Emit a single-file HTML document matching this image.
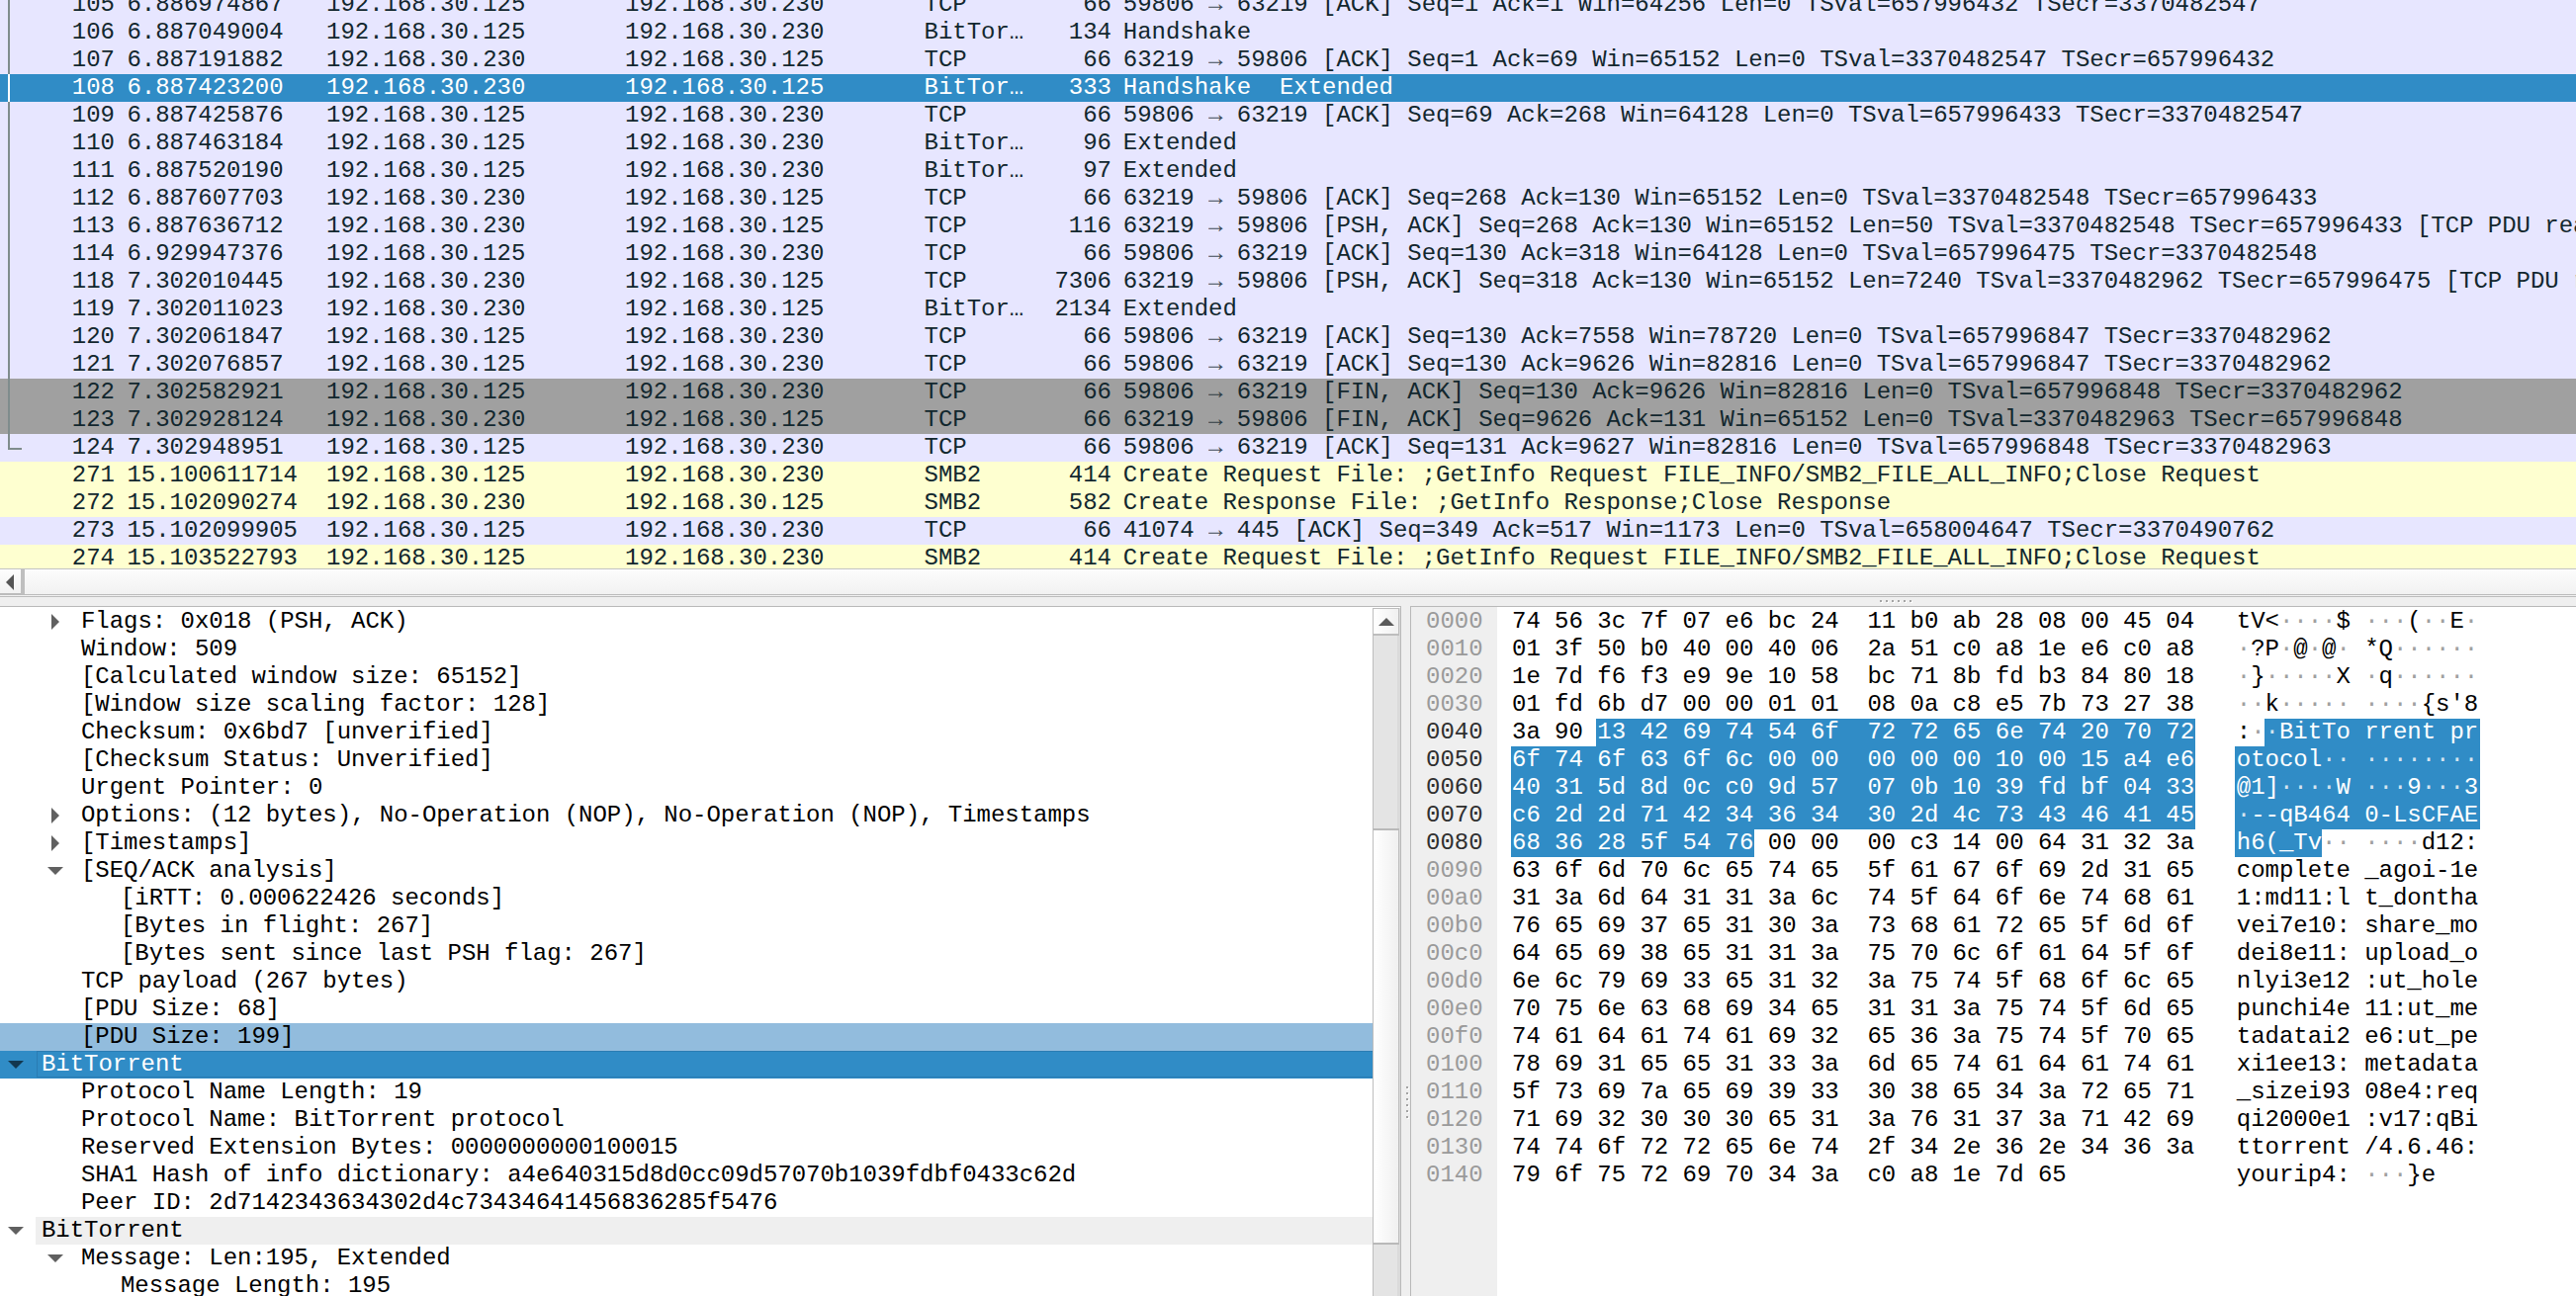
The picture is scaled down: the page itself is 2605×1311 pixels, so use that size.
<!DOCTYPE html>
<html><head><meta charset="utf-8"><title>Wireshark</title>
<style>
html,body{margin:0;padding:0}
body{width:2605px;height:1311px;overflow:hidden;position:relative;background:#efefef;font-family:'Liberation Mono',monospace;font-size:24px;line-height:28px;}
.c{position:absolute;white-space:pre;top:0;letter-spacing:-0.027px}
.c.r{text-align:right}
.ar{opacity:0.8}
#plist{position:absolute;left:0;top:0;width:2605px;height:575px;overflow:hidden;background:#ffffff}
.pr{position:absolute;left:0;width:2605px;height:28px;overflow:hidden}
#hsb{position:absolute;left:0;top:575px;width:2605px;height:29px;background:linear-gradient(#fdfdfd,#f0f0f0)}
.hsb-top{position:absolute;left:0;top:0;width:2605px;height:1px;background:#c4c4c4}
.hsb-btn{position:absolute;left:0;top:1px;width:21px;height:24px;background:linear-gradient(#fefefe,#f2f2f2);border-bottom:2px solid #bcbcbc}
.hsb-sep{position:absolute;left:21px;top:1px;width:4px;height:26px;background:#bfbfbf}
.hsb-l1{position:absolute;left:0;top:26px;width:2605px;height:1px;background:#bcbcbc}
.hsb-l2{position:absolute;left:0;top:28px;width:2605px;height:1px;background:#bcbcbc}
.tri-l{position:absolute;left:6px;top:5px;width:0;height:0;border-top:8px solid transparent;border-bottom:8px solid transparent;border-right:8px solid #555555}
#split1{position:absolute;left:0;top:604px;width:2605px;height:9px;background:#efefef}
.dot{position:absolute;width:2px;height:2px;background:#a4a4a4;box-shadow:1px 1px 0 #ffffff}
#det{position:absolute;left:0;top:613px;width:1416px;height:698px;background:#ffffff;border-top:1px solid #b9b9b9;border-right:1px solid #b9b9b9;box-sizing:content-box;overflow:hidden}
.tri-r{position:absolute;width:0;height:0;border-top:8px solid transparent;border-bottom:8px solid transparent;border-left:8px solid #606060}
.tri-d{position:absolute;width:0;height:0;border-left:8px solid transparent;border-right:8px solid transparent;border-top:8px solid #606060}
#vsb{position:absolute;left:1388px;top:1px;width:28px;height:698px}
.vsb-btn{position:absolute;left:0;top:0;width:27px;height:28px;box-sizing:border-box;border:1px solid #bdbdbd;border-bottom-width:2px;background:linear-gradient(90deg,#ffffff,#f0f0f0)}
.tri-u{position:absolute;left:5px;top:9px;width:0;height:0;border-left:8px solid transparent;border-right:8px solid transparent;border-bottom:8px solid #5a5a5a}
.vsb-groove{position:absolute;left:0;width:28px;box-sizing:border-box;background:#e4e4e4;border-left:1px solid #bdbdbd;border-right:3px solid #dadada}
.vsb-slider{position:absolute;left:0;width:27px;box-sizing:border-box;background:linear-gradient(90deg,#ffffff,#f0f0f0);border:1px solid #bdbdbd;border-top:2px solid #b9b9b9;border-bottom:2px solid #b9b9b9}
#hex{position:absolute;left:1426px;top:613px;width:1179px;height:698px;background:#ffffff;border-top:1px solid #b9b9b9;border-left:1px solid #b9b9b9;overflow:hidden}
</style></head><body>
<div id="plist">
<div class="pr" style="top:-9px;background:#e7e6ff;color:#12272e">
<span class="c r" style="right:2489px">105</span>
<span class="c" style="left:128.4px">6.886974867</span>
<span class="c" style="left:330.1px">192.168.30.125</span>
<span class="c" style="left:632.0px">192.168.30.230</span>
<span class="c" style="left:934.6px">TCP</span>
<span class="c r" style="right:1481.1px">66</span>
<span class="c" style="left:1135.8px">59806 <span class="ar">→</span> 63219 [ACK] Seq=1 Ack=1 Win=64256 Len=0 TSval=657996432 TSecr=3370482547</span>
<div style="position:absolute;left:8px;top:0;width:2px;height:28px;background:#7f8c8d"></div>
</div>
<div class="pr" style="top:19px;background:#e7e6ff;color:#12272e">
<span class="c r" style="right:2489px">106</span>
<span class="c" style="left:128.4px">6.887049004</span>
<span class="c" style="left:330.1px">192.168.30.125</span>
<span class="c" style="left:632.0px">192.168.30.230</span>
<span class="c" style="left:934.6px">BitTor…</span>
<span class="c r" style="right:1481.1px">134</span>
<span class="c" style="left:1135.8px">Handshake</span>
<div style="position:absolute;left:8px;top:0;width:2px;height:28px;background:#7f8c8d"></div>
</div>
<div class="pr" style="top:47px;background:#e7e6ff;color:#12272e">
<span class="c r" style="right:2489px">107</span>
<span class="c" style="left:128.4px">6.887191882</span>
<span class="c" style="left:330.1px">192.168.30.230</span>
<span class="c" style="left:632.0px">192.168.30.125</span>
<span class="c" style="left:934.6px">TCP</span>
<span class="c r" style="right:1481.1px">66</span>
<span class="c" style="left:1135.8px">63219 <span class="ar">→</span> 59806 [ACK] Seq=1 Ack=69 Win=65152 Len=0 TSval=3370482547 TSecr=657996432</span>
<div style="position:absolute;left:8px;top:0;width:2px;height:28px;background:#7f8c8d"></div>
</div>
<div class="pr" style="top:75px;background:#308cc6;color:#ffffff">
<span class="c r" style="right:2489px">108</span>
<span class="c" style="left:128.4px">6.887423200</span>
<span class="c" style="left:330.1px">192.168.30.230</span>
<span class="c" style="left:632.0px">192.168.30.125</span>
<span class="c" style="left:934.6px">BitTor…</span>
<span class="c r" style="right:1481.1px">333</span>
<span class="c" style="left:1135.8px">Handshake  Extended</span>
<div style="position:absolute;left:8px;top:0;width:2px;height:28px;background:#ffffff"></div>
</div>
<div class="pr" style="top:103px;background:#e7e6ff;color:#12272e">
<span class="c r" style="right:2489px">109</span>
<span class="c" style="left:128.4px">6.887425876</span>
<span class="c" style="left:330.1px">192.168.30.125</span>
<span class="c" style="left:632.0px">192.168.30.230</span>
<span class="c" style="left:934.6px">TCP</span>
<span class="c r" style="right:1481.1px">66</span>
<span class="c" style="left:1135.8px">59806 <span class="ar">→</span> 63219 [ACK] Seq=69 Ack=268 Win=64128 Len=0 TSval=657996433 TSecr=3370482547</span>
<div style="position:absolute;left:8px;top:0;width:2px;height:28px;background:#7f8c8d"></div>
</div>
<div class="pr" style="top:131px;background:#e7e6ff;color:#12272e">
<span class="c r" style="right:2489px">110</span>
<span class="c" style="left:128.4px">6.887463184</span>
<span class="c" style="left:330.1px">192.168.30.125</span>
<span class="c" style="left:632.0px">192.168.30.230</span>
<span class="c" style="left:934.6px">BitTor…</span>
<span class="c r" style="right:1481.1px">96</span>
<span class="c" style="left:1135.8px">Extended</span>
<div style="position:absolute;left:8px;top:0;width:2px;height:28px;background:#7f8c8d"></div>
</div>
<div class="pr" style="top:159px;background:#e7e6ff;color:#12272e">
<span class="c r" style="right:2489px">111</span>
<span class="c" style="left:128.4px">6.887520190</span>
<span class="c" style="left:330.1px">192.168.30.125</span>
<span class="c" style="left:632.0px">192.168.30.230</span>
<span class="c" style="left:934.6px">BitTor…</span>
<span class="c r" style="right:1481.1px">97</span>
<span class="c" style="left:1135.8px">Extended</span>
<div style="position:absolute;left:8px;top:0;width:2px;height:28px;background:#7f8c8d"></div>
</div>
<div class="pr" style="top:187px;background:#e7e6ff;color:#12272e">
<span class="c r" style="right:2489px">112</span>
<span class="c" style="left:128.4px">6.887607703</span>
<span class="c" style="left:330.1px">192.168.30.230</span>
<span class="c" style="left:632.0px">192.168.30.125</span>
<span class="c" style="left:934.6px">TCP</span>
<span class="c r" style="right:1481.1px">66</span>
<span class="c" style="left:1135.8px">63219 <span class="ar">→</span> 59806 [ACK] Seq=268 Ack=130 Win=65152 Len=0 TSval=3370482548 TSecr=657996433</span>
<div style="position:absolute;left:8px;top:0;width:2px;height:28px;background:#7f8c8d"></div>
</div>
<div class="pr" style="top:215px;background:#e7e6ff;color:#12272e">
<span class="c r" style="right:2489px">113</span>
<span class="c" style="left:128.4px">6.887636712</span>
<span class="c" style="left:330.1px">192.168.30.230</span>
<span class="c" style="left:632.0px">192.168.30.125</span>
<span class="c" style="left:934.6px">TCP</span>
<span class="c r" style="right:1481.1px">116</span>
<span class="c" style="left:1135.8px">63219 <span class="ar">→</span> 59806 [PSH, ACK] Seq=268 Ack=130 Win=65152 Len=50 TSval=3370482548 TSecr=657996433 [TCP PDU reassembled in 118]</span>
<div style="position:absolute;left:8px;top:0;width:2px;height:28px;background:#7f8c8d"></div>
</div>
<div class="pr" style="top:243px;background:#e7e6ff;color:#12272e">
<span class="c r" style="right:2489px">114</span>
<span class="c" style="left:128.4px">6.929947376</span>
<span class="c" style="left:330.1px">192.168.30.125</span>
<span class="c" style="left:632.0px">192.168.30.230</span>
<span class="c" style="left:934.6px">TCP</span>
<span class="c r" style="right:1481.1px">66</span>
<span class="c" style="left:1135.8px">59806 <span class="ar">→</span> 63219 [ACK] Seq=130 Ack=318 Win=64128 Len=0 TSval=657996475 TSecr=3370482548</span>
<div style="position:absolute;left:8px;top:0;width:2px;height:28px;background:#7f8c8d"></div>
</div>
<div class="pr" style="top:271px;background:#e7e6ff;color:#12272e">
<span class="c r" style="right:2489px">118</span>
<span class="c" style="left:128.4px">7.302010445</span>
<span class="c" style="left:330.1px">192.168.30.230</span>
<span class="c" style="left:632.0px">192.168.30.125</span>
<span class="c" style="left:934.6px">TCP</span>
<span class="c r" style="right:1481.1px">7306</span>
<span class="c" style="left:1135.8px">63219 <span class="ar">→</span> 59806 [PSH, ACK] Seq=318 Ack=130 Win=65152 Len=7240 TSval=3370482962 TSecr=657996475 [TCP PDU reassembled in 119]</span>
<div style="position:absolute;left:8px;top:0;width:2px;height:28px;background:#7f8c8d"></div>
</div>
<div class="pr" style="top:299px;background:#e7e6ff;color:#12272e">
<span class="c r" style="right:2489px">119</span>
<span class="c" style="left:128.4px">7.302011023</span>
<span class="c" style="left:330.1px">192.168.30.230</span>
<span class="c" style="left:632.0px">192.168.30.125</span>
<span class="c" style="left:934.6px">BitTor…</span>
<span class="c r" style="right:1481.1px">2134</span>
<span class="c" style="left:1135.8px">Extended</span>
<div style="position:absolute;left:8px;top:0;width:2px;height:28px;background:#7f8c8d"></div>
</div>
<div class="pr" style="top:327px;background:#e7e6ff;color:#12272e">
<span class="c r" style="right:2489px">120</span>
<span class="c" style="left:128.4px">7.302061847</span>
<span class="c" style="left:330.1px">192.168.30.125</span>
<span class="c" style="left:632.0px">192.168.30.230</span>
<span class="c" style="left:934.6px">TCP</span>
<span class="c r" style="right:1481.1px">66</span>
<span class="c" style="left:1135.8px">59806 <span class="ar">→</span> 63219 [ACK] Seq=130 Ack=7558 Win=78720 Len=0 TSval=657996847 TSecr=3370482962</span>
<div style="position:absolute;left:8px;top:0;width:2px;height:28px;background:#7f8c8d"></div>
</div>
<div class="pr" style="top:355px;background:#e7e6ff;color:#12272e">
<span class="c r" style="right:2489px">121</span>
<span class="c" style="left:128.4px">7.302076857</span>
<span class="c" style="left:330.1px">192.168.30.125</span>
<span class="c" style="left:632.0px">192.168.30.230</span>
<span class="c" style="left:934.6px">TCP</span>
<span class="c r" style="right:1481.1px">66</span>
<span class="c" style="left:1135.8px">59806 <span class="ar">→</span> 63219 [ACK] Seq=130 Ack=9626 Win=82816 Len=0 TSval=657996847 TSecr=3370482962</span>
<div style="position:absolute;left:8px;top:0;width:2px;height:28px;background:#7f8c8d"></div>
</div>
<div class="pr" style="top:383px;background:#a0a0a0;color:#12272e">
<span class="c r" style="right:2489px">122</span>
<span class="c" style="left:128.4px">7.302582921</span>
<span class="c" style="left:330.1px">192.168.30.125</span>
<span class="c" style="left:632.0px">192.168.30.230</span>
<span class="c" style="left:934.6px">TCP</span>
<span class="c r" style="right:1481.1px">66</span>
<span class="c" style="left:1135.8px">59806 <span class="ar">→</span> 63219 [FIN, ACK] Seq=130 Ack=9626 Win=82816 Len=0 TSval=657996848 TSecr=3370482962</span>
<div style="position:absolute;left:8px;top:0;width:2px;height:28px;background:#7f8c8d"></div>
</div>
<div class="pr" style="top:411px;background:#a0a0a0;color:#12272e">
<span class="c r" style="right:2489px">123</span>
<span class="c" style="left:128.4px">7.302928124</span>
<span class="c" style="left:330.1px">192.168.30.230</span>
<span class="c" style="left:632.0px">192.168.30.125</span>
<span class="c" style="left:934.6px">TCP</span>
<span class="c r" style="right:1481.1px">66</span>
<span class="c" style="left:1135.8px">63219 <span class="ar">→</span> 59806 [FIN, ACK] Seq=9626 Ack=131 Win=65152 Len=0 TSval=3370482963 TSecr=657996848</span>
<div style="position:absolute;left:8px;top:0;width:2px;height:28px;background:#7f8c8d"></div>
</div>
<div class="pr" style="top:439px;background:#e7e6ff;color:#12272e">
<span class="c r" style="right:2489px">124</span>
<span class="c" style="left:128.4px">7.302948951</span>
<span class="c" style="left:330.1px">192.168.30.125</span>
<span class="c" style="left:632.0px">192.168.30.230</span>
<span class="c" style="left:934.6px">TCP</span>
<span class="c r" style="right:1481.1px">66</span>
<span class="c" style="left:1135.8px">59806 <span class="ar">→</span> 63219 [ACK] Seq=131 Ack=9627 Win=82816 Len=0 TSval=657996848 TSecr=3370482963</span>
<div style="position:absolute;left:8px;top:0;width:2px;height:16px;background:#7f8c8d"></div>
<div style="position:absolute;left:8px;top:14px;width:14px;height:2px;background:#7f8c8d"></div>
</div>
<div class="pr" style="top:467px;background:#feffd0;color:#12272e">
<span class="c r" style="right:2489px">271</span>
<span class="c" style="left:128.4px">15.100611714</span>
<span class="c" style="left:330.1px">192.168.30.125</span>
<span class="c" style="left:632.0px">192.168.30.230</span>
<span class="c" style="left:934.6px">SMB2</span>
<span class="c r" style="right:1481.1px">414</span>
<span class="c" style="left:1135.8px">Create Request File: ;GetInfo Request FILE_INFO/SMB2_FILE_ALL_INFO;Close Request</span>
</div>
<div class="pr" style="top:495px;background:#feffd0;color:#12272e">
<span class="c r" style="right:2489px">272</span>
<span class="c" style="left:128.4px">15.102090274</span>
<span class="c" style="left:330.1px">192.168.30.230</span>
<span class="c" style="left:632.0px">192.168.30.125</span>
<span class="c" style="left:934.6px">SMB2</span>
<span class="c r" style="right:1481.1px">582</span>
<span class="c" style="left:1135.8px">Create Response File: ;GetInfo Response;Close Response</span>
</div>
<div class="pr" style="top:523px;background:#e7e6ff;color:#12272e">
<span class="c r" style="right:2489px">273</span>
<span class="c" style="left:128.4px">15.102099905</span>
<span class="c" style="left:330.1px">192.168.30.125</span>
<span class="c" style="left:632.0px">192.168.30.230</span>
<span class="c" style="left:934.6px">TCP</span>
<span class="c r" style="right:1481.1px">66</span>
<span class="c" style="left:1135.8px">41074 <span class="ar">→</span> 445 [ACK] Seq=349 Ack=517 Win=1173 Len=0 TSval=658004647 TSecr=3370490762</span>
</div>
<div class="pr" style="top:551px;background:#feffd0;color:#12272e">
<span class="c r" style="right:2489px">274</span>
<span class="c" style="left:128.4px">15.103522793</span>
<span class="c" style="left:330.1px">192.168.30.125</span>
<span class="c" style="left:632.0px">192.168.30.230</span>
<span class="c" style="left:934.6px">SMB2</span>
<span class="c r" style="right:1481.1px">414</span>
<span class="c" style="left:1135.8px">Create Request File: ;GetInfo Request FILE_INFO/SMB2_FILE_ALL_INFO;Close Request</span>
</div>
</div>
<div id="hsb">
 <div class="hsb-top"></div>
 <div class="hsb-btn"><div class="tri-l"></div></div>
 <div class="hsb-sep"></div>
 <div class="hsb-l1"></div><div class="hsb-l2"></div>
</div>
<div id="split1"></div>
<div class="dot" style="left:1901px;top:607px"></div>
<div class="dot" style="left:1907px;top:607px"></div>
<div class="dot" style="left:1913px;top:607px"></div>
<div class="dot" style="left:1919px;top:607px"></div>
<div class="dot" style="left:1925px;top:607px"></div>
<div class="dot" style="left:1931px;top:607px"></div>
<div id="det">
<span class="c" style="left:81.9px;top:1px;color:#000000">Flags: 0x018 (PSH, ACK)</span>
<div class="tri-r" style="left:52px;top:7px;border-left-color:#606060"></div>
<span class="c" style="left:81.9px;top:29px;color:#000000">Window: 509</span>
<span class="c" style="left:81.9px;top:57px;color:#000000">[Calculated window size: 65152]</span>
<span class="c" style="left:81.9px;top:85px;color:#000000">[Window size scaling factor: 128]</span>
<span class="c" style="left:81.9px;top:113px;color:#000000">Checksum: 0x6bd7 [unverified]</span>
<span class="c" style="left:81.9px;top:141px;color:#000000">[Checksum Status: Unverified]</span>
<span class="c" style="left:81.9px;top:169px;color:#000000">Urgent Pointer: 0</span>
<span class="c" style="left:81.9px;top:197px;color:#000000">Options: (12 bytes), No-Operation (NOP), No-Operation (NOP), Timestamps</span>
<div class="tri-r" style="left:52px;top:203px;border-left-color:#606060"></div>
<span class="c" style="left:81.9px;top:225px;color:#000000">[Timestamps]</span>
<div class="tri-r" style="left:52px;top:231px;border-left-color:#606060"></div>
<span class="c" style="left:81.9px;top:253px;color:#000000">[SEQ/ACK analysis]</span>
<div class="tri-d" style="left:48px;top:263px;border-top-color:#606060"></div>
<span class="c" style="left:121.9px;top:281px;color:#000000">[iRTT: 0.000622426 seconds]</span>
<span class="c" style="left:121.9px;top:309px;color:#000000">[Bytes in flight: 267]</span>
<span class="c" style="left:121.9px;top:337px;color:#000000">[Bytes sent since last PSH flag: 267]</span>
<span class="c" style="left:81.9px;top:365px;color:#000000">TCP payload (267 bytes)</span>
<span class="c" style="left:81.9px;top:393px;color:#000000">[PDU Size: 68]</span>
<div style="position:absolute;left:0;top:421px;width:1388px;height:28px;background:#92bcdd"></div>
<span class="c" style="left:81.9px;top:421px;color:#000000">[PDU Size: 199]</span>
<div style="position:absolute;left:0;top:449px;width:1388px;height:28px;background:#308cc6"></div>
<div style="position:absolute;left:37px;top:449px;width:1351px;height:27px;border-top:1px solid #2a7cb3;border-left:1px solid #2a7cb3;border-bottom:1px solid #2a7cb3;box-sizing:border-box"></div>
<span class="c" style="left:41.9px;top:449px;color:#ffffff">BitTorrent</span>
<div class="tri-d" style="left:8px;top:459px;border-top-color:#12374f"></div>
<span class="c" style="left:81.9px;top:477px;color:#000000">Protocol Name Length: 19</span>
<span class="c" style="left:81.9px;top:505px;color:#000000">Protocol Name: BitTorrent protocol</span>
<span class="c" style="left:81.9px;top:533px;color:#000000">Reserved Extension Bytes: 0000000000100015</span>
<span class="c" style="left:81.9px;top:561px;color:#000000">SHA1 Hash of info dictionary: a4e640315d8d0cc09d57070b1039fdbf0433c62d</span>
<span class="c" style="left:81.9px;top:589px;color:#000000">Peer ID: 2d7142343634302d4c73434641456836285f5476</span>
<div style="position:absolute;left:36px;top:617px;width:1352px;height:28px;background:#efefef"></div>
<span class="c" style="left:41.9px;top:617px;color:#000000">BitTorrent</span>
<div class="tri-d" style="left:8px;top:627px;border-top-color:#606060"></div>
<span class="c" style="left:81.9px;top:645px;color:#000000">Message: Len:195, Extended</span>
<div class="tri-d" style="left:48px;top:655px;border-top-color:#606060"></div>
<span class="c" style="left:121.9px;top:673px;color:#000000">Message Length: 195</span>
<div id="vsb">
 <div class="vsb-groove" style="top:0;height:698px"></div>
 <div class="vsb-btn"><div class="tri-u"></div></div>
 <div class="vsb-slider" style="top:223px;height:421px"></div>
</div>
</div>
<div class="dot" style="left:1422px;top:1099px"></div>
<div class="dot" style="left:1422px;top:1105px"></div>
<div class="dot" style="left:1422px;top:1111px"></div>
<div class="dot" style="left:1422px;top:1117px"></div>
<div class="dot" style="left:1422px;top:1123px"></div>
<div class="dot" style="left:1422px;top:1129px"></div>
<div id="hex">
<div style="position:absolute;left:0;top:0;width:87px;height:698px;background:#efefef"></div>
<span class="c" style="left:15.0px;top:1px;color:#9a9a9a">0000</span>
<span class="c" style="left:102.00px;top:1px;color:#000000">74</span>
<span class="c" style="left:145.12px;top:1px;color:#000000">56</span>
<span class="c" style="left:188.25px;top:1px;color:#000000">3c</span>
<span class="c" style="left:231.38px;top:1px;color:#000000">7f</span>
<span class="c" style="left:274.50px;top:1px;color:#000000">07</span>
<span class="c" style="left:317.62px;top:1px;color:#000000">e6</span>
<span class="c" style="left:360.75px;top:1px;color:#000000">bc</span>
<span class="c" style="left:403.88px;top:1px;color:#000000">24</span>
<span class="c" style="left:461.38px;top:1px;color:#000000">11</span>
<span class="c" style="left:504.50px;top:1px;color:#000000">b0</span>
<span class="c" style="left:547.62px;top:1px;color:#000000">ab</span>
<span class="c" style="left:590.75px;top:1px;color:#000000">28</span>
<span class="c" style="left:633.88px;top:1px;color:#000000">08</span>
<span class="c" style="left:677.00px;top:1px;color:#000000">00</span>
<span class="c" style="left:720.12px;top:1px;color:#000000">45</span>
<span class="c" style="left:763.25px;top:1px;color:#000000">04</span>
<span class="c" style="left:834.80px;top:1px;color:#000000">t</span>
<span class="c" style="left:849.18px;top:1px;color:#000000">V</span>
<span class="c" style="left:863.55px;top:1px;color:#000000">&lt;</span>
<span class="c" style="left:877.93px;top:1px;color:#a0a0a0">·</span>
<span class="c" style="left:892.30px;top:1px;color:#a0a0a0">·</span>
<span class="c" style="left:906.68px;top:1px;color:#a0a0a0">·</span>
<span class="c" style="left:921.05px;top:1px;color:#a0a0a0">·</span>
<span class="c" style="left:935.43px;top:1px;color:#000000">$</span>
<span class="c" style="left:964.18px;top:1px;color:#a0a0a0">·</span>
<span class="c" style="left:978.55px;top:1px;color:#a0a0a0">·</span>
<span class="c" style="left:992.93px;top:1px;color:#a0a0a0">·</span>
<span class="c" style="left:1007.30px;top:1px;color:#000000">(</span>
<span class="c" style="left:1021.68px;top:1px;color:#a0a0a0">·</span>
<span class="c" style="left:1036.05px;top:1px;color:#a0a0a0">·</span>
<span class="c" style="left:1050.43px;top:1px;color:#000000">E</span>
<span class="c" style="left:1064.80px;top:1px;color:#a0a0a0">·</span>
<span class="c" style="left:15.0px;top:29px;color:#9a9a9a">0010</span>
<span class="c" style="left:102.00px;top:29px;color:#000000">01</span>
<span class="c" style="left:145.12px;top:29px;color:#000000">3f</span>
<span class="c" style="left:188.25px;top:29px;color:#000000">50</span>
<span class="c" style="left:231.38px;top:29px;color:#000000">b0</span>
<span class="c" style="left:274.50px;top:29px;color:#000000">40</span>
<span class="c" style="left:317.62px;top:29px;color:#000000">00</span>
<span class="c" style="left:360.75px;top:29px;color:#000000">40</span>
<span class="c" style="left:403.88px;top:29px;color:#000000">06</span>
<span class="c" style="left:461.38px;top:29px;color:#000000">2a</span>
<span class="c" style="left:504.50px;top:29px;color:#000000">51</span>
<span class="c" style="left:547.62px;top:29px;color:#000000">c0</span>
<span class="c" style="left:590.75px;top:29px;color:#000000">a8</span>
<span class="c" style="left:633.88px;top:29px;color:#000000">1e</span>
<span class="c" style="left:677.00px;top:29px;color:#000000">e6</span>
<span class="c" style="left:720.12px;top:29px;color:#000000">c0</span>
<span class="c" style="left:763.25px;top:29px;color:#000000">a8</span>
<span class="c" style="left:834.80px;top:29px;color:#a0a0a0">·</span>
<span class="c" style="left:849.18px;top:29px;color:#000000">?</span>
<span class="c" style="left:863.55px;top:29px;color:#000000">P</span>
<span class="c" style="left:877.93px;top:29px;color:#a0a0a0">·</span>
<span class="c" style="left:892.30px;top:29px;color:#000000">@</span>
<span class="c" style="left:906.68px;top:29px;color:#a0a0a0">·</span>
<span class="c" style="left:921.05px;top:29px;color:#000000">@</span>
<span class="c" style="left:935.43px;top:29px;color:#a0a0a0">·</span>
<span class="c" style="left:964.18px;top:29px;color:#000000">*</span>
<span class="c" style="left:978.55px;top:29px;color:#000000">Q</span>
<span class="c" style="left:992.93px;top:29px;color:#a0a0a0">·</span>
<span class="c" style="left:1007.30px;top:29px;color:#a0a0a0">·</span>
<span class="c" style="left:1021.68px;top:29px;color:#a0a0a0">·</span>
<span class="c" style="left:1036.05px;top:29px;color:#a0a0a0">·</span>
<span class="c" style="left:1050.43px;top:29px;color:#a0a0a0">·</span>
<span class="c" style="left:1064.80px;top:29px;color:#a0a0a0">·</span>
<span class="c" style="left:15.0px;top:57px;color:#9a9a9a">0020</span>
<span class="c" style="left:102.00px;top:57px;color:#000000">1e</span>
<span class="c" style="left:145.12px;top:57px;color:#000000">7d</span>
<span class="c" style="left:188.25px;top:57px;color:#000000">f6</span>
<span class="c" style="left:231.38px;top:57px;color:#000000">f3</span>
<span class="c" style="left:274.50px;top:57px;color:#000000">e9</span>
<span class="c" style="left:317.62px;top:57px;color:#000000">9e</span>
<span class="c" style="left:360.75px;top:57px;color:#000000">10</span>
<span class="c" style="left:403.88px;top:57px;color:#000000">58</span>
<span class="c" style="left:461.38px;top:57px;color:#000000">bc</span>
<span class="c" style="left:504.50px;top:57px;color:#000000">71</span>
<span class="c" style="left:547.62px;top:57px;color:#000000">8b</span>
<span class="c" style="left:590.75px;top:57px;color:#000000">fd</span>
<span class="c" style="left:633.88px;top:57px;color:#000000">b3</span>
<span class="c" style="left:677.00px;top:57px;color:#000000">84</span>
<span class="c" style="left:720.12px;top:57px;color:#000000">80</span>
<span class="c" style="left:763.25px;top:57px;color:#000000">18</span>
<span class="c" style="left:834.80px;top:57px;color:#a0a0a0">·</span>
<span class="c" style="left:849.18px;top:57px;color:#000000">}</span>
<span class="c" style="left:863.55px;top:57px;color:#a0a0a0">·</span>
<span class="c" style="left:877.93px;top:57px;color:#a0a0a0">·</span>
<span class="c" style="left:892.30px;top:57px;color:#a0a0a0">·</span>
<span class="c" style="left:906.68px;top:57px;color:#a0a0a0">·</span>
<span class="c" style="left:921.05px;top:57px;color:#a0a0a0">·</span>
<span class="c" style="left:935.43px;top:57px;color:#000000">X</span>
<span class="c" style="left:964.18px;top:57px;color:#a0a0a0">·</span>
<span class="c" style="left:978.55px;top:57px;color:#000000">q</span>
<span class="c" style="left:992.93px;top:57px;color:#a0a0a0">·</span>
<span class="c" style="left:1007.30px;top:57px;color:#a0a0a0">·</span>
<span class="c" style="left:1021.68px;top:57px;color:#a0a0a0">·</span>
<span class="c" style="left:1036.05px;top:57px;color:#a0a0a0">·</span>
<span class="c" style="left:1050.43px;top:57px;color:#a0a0a0">·</span>
<span class="c" style="left:1064.80px;top:57px;color:#a0a0a0">·</span>
<span class="c" style="left:15.0px;top:85px;color:#9a9a9a">0030</span>
<span class="c" style="left:102.00px;top:85px;color:#000000">01</span>
<span class="c" style="left:145.12px;top:85px;color:#000000">fd</span>
<span class="c" style="left:188.25px;top:85px;color:#000000">6b</span>
<span class="c" style="left:231.38px;top:85px;color:#000000">d7</span>
<span class="c" style="left:274.50px;top:85px;color:#000000">00</span>
<span class="c" style="left:317.62px;top:85px;color:#000000">00</span>
<span class="c" style="left:360.75px;top:85px;color:#000000">01</span>
<span class="c" style="left:403.88px;top:85px;color:#000000">01</span>
<span class="c" style="left:461.38px;top:85px;color:#000000">08</span>
<span class="c" style="left:504.50px;top:85px;color:#000000">0a</span>
<span class="c" style="left:547.62px;top:85px;color:#000000">c8</span>
<span class="c" style="left:590.75px;top:85px;color:#000000">e5</span>
<span class="c" style="left:633.88px;top:85px;color:#000000">7b</span>
<span class="c" style="left:677.00px;top:85px;color:#000000">73</span>
<span class="c" style="left:720.12px;top:85px;color:#000000">27</span>
<span class="c" style="left:763.25px;top:85px;color:#000000">38</span>
<span class="c" style="left:834.80px;top:85px;color:#a0a0a0">·</span>
<span class="c" style="left:849.18px;top:85px;color:#a0a0a0">·</span>
<span class="c" style="left:863.55px;top:85px;color:#000000">k</span>
<span class="c" style="left:877.93px;top:85px;color:#a0a0a0">·</span>
<span class="c" style="left:892.30px;top:85px;color:#a0a0a0">·</span>
<span class="c" style="left:906.68px;top:85px;color:#a0a0a0">·</span>
<span class="c" style="left:921.05px;top:85px;color:#a0a0a0">·</span>
<span class="c" style="left:935.43px;top:85px;color:#a0a0a0">·</span>
<span class="c" style="left:964.18px;top:85px;color:#a0a0a0">·</span>
<span class="c" style="left:978.55px;top:85px;color:#a0a0a0">·</span>
<span class="c" style="left:992.93px;top:85px;color:#a0a0a0">·</span>
<span class="c" style="left:1007.30px;top:85px;color:#a0a0a0">·</span>
<span class="c" style="left:1021.68px;top:85px;color:#000000">{</span>
<span class="c" style="left:1036.05px;top:85px;color:#000000">s</span>
<span class="c" style="left:1050.43px;top:85px;color:#000000">&#x27;</span>
<span class="c" style="left:1064.80px;top:85px;color:#000000">8</span>
<span class="c" style="left:15.0px;top:113px;color:#2f2f2f">0040</span>
<div style="position:absolute;left:187.25px;top:113px;width:605.25px;height:28px;background:#308cc6"></div>
<div style="position:absolute;left:863.0px;top:113px;width:218.0px;height:28px;background:#308cc6"></div>
<span class="c" style="left:102.00px;top:113px;color:#000000">3a</span>
<span class="c" style="left:145.12px;top:113px;color:#000000">90</span>
<span class="c" style="left:188.25px;top:113px;color:#ffffff">13</span>
<span class="c" style="left:231.38px;top:113px;color:#ffffff">42</span>
<span class="c" style="left:274.50px;top:113px;color:#ffffff">69</span>
<span class="c" style="left:317.62px;top:113px;color:#ffffff">74</span>
<span class="c" style="left:360.75px;top:113px;color:#ffffff">54</span>
<span class="c" style="left:403.88px;top:113px;color:#ffffff">6f</span>
<span class="c" style="left:461.38px;top:113px;color:#ffffff">72</span>
<span class="c" style="left:504.50px;top:113px;color:#ffffff">72</span>
<span class="c" style="left:547.62px;top:113px;color:#ffffff">65</span>
<span class="c" style="left:590.75px;top:113px;color:#ffffff">6e</span>
<span class="c" style="left:633.88px;top:113px;color:#ffffff">74</span>
<span class="c" style="left:677.00px;top:113px;color:#ffffff">20</span>
<span class="c" style="left:720.12px;top:113px;color:#ffffff">70</span>
<span class="c" style="left:763.25px;top:113px;color:#ffffff">72</span>
<span class="c" style="left:834.80px;top:113px;color:#000000">:</span>
<span class="c" style="left:849.18px;top:113px;color:#a0a0a0">·</span>
<span class="c" style="left:863.55px;top:113px;color:#d5e4f0">·</span>
<span class="c" style="left:877.93px;top:113px;color:#ffffff">B</span>
<span class="c" style="left:892.30px;top:113px;color:#ffffff">i</span>
<span class="c" style="left:906.68px;top:113px;color:#ffffff">t</span>
<span class="c" style="left:921.05px;top:113px;color:#ffffff">T</span>
<span class="c" style="left:935.43px;top:113px;color:#ffffff">o</span>
<span class="c" style="left:964.18px;top:113px;color:#ffffff">r</span>
<span class="c" style="left:978.55px;top:113px;color:#ffffff">r</span>
<span class="c" style="left:992.93px;top:113px;color:#ffffff">e</span>
<span class="c" style="left:1007.30px;top:113px;color:#ffffff">n</span>
<span class="c" style="left:1021.68px;top:113px;color:#ffffff">t</span>
<span class="c" style="left:1050.43px;top:113px;color:#ffffff">p</span>
<span class="c" style="left:1064.80px;top:113px;color:#ffffff">r</span>
<span class="c" style="left:15.0px;top:141px;color:#2f2f2f">0050</span>
<div style="position:absolute;left:101.0px;top:141px;width:691.5px;height:28px;background:#308cc6"></div>
<div style="position:absolute;left:833.0px;top:141px;width:248.0px;height:28px;background:#308cc6"></div>
<span class="c" style="left:102.00px;top:141px;color:#ffffff">6f</span>
<span class="c" style="left:145.12px;top:141px;color:#ffffff">74</span>
<span class="c" style="left:188.25px;top:141px;color:#ffffff">6f</span>
<span class="c" style="left:231.38px;top:141px;color:#ffffff">63</span>
<span class="c" style="left:274.50px;top:141px;color:#ffffff">6f</span>
<span class="c" style="left:317.62px;top:141px;color:#ffffff">6c</span>
<span class="c" style="left:360.75px;top:141px;color:#ffffff">00</span>
<span class="c" style="left:403.88px;top:141px;color:#ffffff">00</span>
<span class="c" style="left:461.38px;top:141px;color:#ffffff">00</span>
<span class="c" style="left:504.50px;top:141px;color:#ffffff">00</span>
<span class="c" style="left:547.62px;top:141px;color:#ffffff">00</span>
<span class="c" style="left:590.75px;top:141px;color:#ffffff">10</span>
<span class="c" style="left:633.88px;top:141px;color:#ffffff">00</span>
<span class="c" style="left:677.00px;top:141px;color:#ffffff">15</span>
<span class="c" style="left:720.12px;top:141px;color:#ffffff">a4</span>
<span class="c" style="left:763.25px;top:141px;color:#ffffff">e6</span>
<span class="c" style="left:834.80px;top:141px;color:#ffffff">o</span>
<span class="c" style="left:849.18px;top:141px;color:#ffffff">t</span>
<span class="c" style="left:863.55px;top:141px;color:#ffffff">o</span>
<span class="c" style="left:877.93px;top:141px;color:#ffffff">c</span>
<span class="c" style="left:892.30px;top:141px;color:#ffffff">o</span>
<span class="c" style="left:906.68px;top:141px;color:#ffffff">l</span>
<span class="c" style="left:921.05px;top:141px;color:#d5e4f0">·</span>
<span class="c" style="left:935.43px;top:141px;color:#d5e4f0">·</span>
<span class="c" style="left:964.18px;top:141px;color:#d5e4f0">·</span>
<span class="c" style="left:978.55px;top:141px;color:#d5e4f0">·</span>
<span class="c" style="left:992.93px;top:141px;color:#d5e4f0">·</span>
<span class="c" style="left:1007.30px;top:141px;color:#d5e4f0">·</span>
<span class="c" style="left:1021.68px;top:141px;color:#d5e4f0">·</span>
<span class="c" style="left:1036.05px;top:141px;color:#d5e4f0">·</span>
<span class="c" style="left:1050.43px;top:141px;color:#d5e4f0">·</span>
<span class="c" style="left:1064.80px;top:141px;color:#d5e4f0">·</span>
<span class="c" style="left:15.0px;top:169px;color:#2f2f2f">0060</span>
<div style="position:absolute;left:101.0px;top:169px;width:691.5px;height:28px;background:#308cc6"></div>
<div style="position:absolute;left:833.0px;top:169px;width:248.0px;height:28px;background:#308cc6"></div>
<span class="c" style="left:102.00px;top:169px;color:#ffffff">40</span>
<span class="c" style="left:145.12px;top:169px;color:#ffffff">31</span>
<span class="c" style="left:188.25px;top:169px;color:#ffffff">5d</span>
<span class="c" style="left:231.38px;top:169px;color:#ffffff">8d</span>
<span class="c" style="left:274.50px;top:169px;color:#ffffff">0c</span>
<span class="c" style="left:317.62px;top:169px;color:#ffffff">c0</span>
<span class="c" style="left:360.75px;top:169px;color:#ffffff">9d</span>
<span class="c" style="left:403.88px;top:169px;color:#ffffff">57</span>
<span class="c" style="left:461.38px;top:169px;color:#ffffff">07</span>
<span class="c" style="left:504.50px;top:169px;color:#ffffff">0b</span>
<span class="c" style="left:547.62px;top:169px;color:#ffffff">10</span>
<span class="c" style="left:590.75px;top:169px;color:#ffffff">39</span>
<span class="c" style="left:633.88px;top:169px;color:#ffffff">fd</span>
<span class="c" style="left:677.00px;top:169px;color:#ffffff">bf</span>
<span class="c" style="left:720.12px;top:169px;color:#ffffff">04</span>
<span class="c" style="left:763.25px;top:169px;color:#ffffff">33</span>
<span class="c" style="left:834.80px;top:169px;color:#ffffff">@</span>
<span class="c" style="left:849.18px;top:169px;color:#ffffff">1</span>
<span class="c" style="left:863.55px;top:169px;color:#ffffff">]</span>
<span class="c" style="left:877.93px;top:169px;color:#d5e4f0">·</span>
<span class="c" style="left:892.30px;top:169px;color:#d5e4f0">·</span>
<span class="c" style="left:906.68px;top:169px;color:#d5e4f0">·</span>
<span class="c" style="left:921.05px;top:169px;color:#d5e4f0">·</span>
<span class="c" style="left:935.43px;top:169px;color:#ffffff">W</span>
<span class="c" style="left:964.18px;top:169px;color:#d5e4f0">·</span>
<span class="c" style="left:978.55px;top:169px;color:#d5e4f0">·</span>
<span class="c" style="left:992.93px;top:169px;color:#d5e4f0">·</span>
<span class="c" style="left:1007.30px;top:169px;color:#ffffff">9</span>
<span class="c" style="left:1021.68px;top:169px;color:#d5e4f0">·</span>
<span class="c" style="left:1036.05px;top:169px;color:#d5e4f0">·</span>
<span class="c" style="left:1050.43px;top:169px;color:#d5e4f0">·</span>
<span class="c" style="left:1064.80px;top:169px;color:#ffffff">3</span>
<span class="c" style="left:15.0px;top:197px;color:#2f2f2f">0070</span>
<div style="position:absolute;left:101.0px;top:197px;width:691.5px;height:28px;background:#308cc6"></div>
<div style="position:absolute;left:833.0px;top:197px;width:248.0px;height:28px;background:#308cc6"></div>
<span class="c" style="left:102.00px;top:197px;color:#ffffff">c6</span>
<span class="c" style="left:145.12px;top:197px;color:#ffffff">2d</span>
<span class="c" style="left:188.25px;top:197px;color:#ffffff">2d</span>
<span class="c" style="left:231.38px;top:197px;color:#ffffff">71</span>
<span class="c" style="left:274.50px;top:197px;color:#ffffff">42</span>
<span class="c" style="left:317.62px;top:197px;color:#ffffff">34</span>
<span class="c" style="left:360.75px;top:197px;color:#ffffff">36</span>
<span class="c" style="left:403.88px;top:197px;color:#ffffff">34</span>
<span class="c" style="left:461.38px;top:197px;color:#ffffff">30</span>
<span class="c" style="left:504.50px;top:197px;color:#ffffff">2d</span>
<span class="c" style="left:547.62px;top:197px;color:#ffffff">4c</span>
<span class="c" style="left:590.75px;top:197px;color:#ffffff">73</span>
<span class="c" style="left:633.88px;top:197px;color:#ffffff">43</span>
<span class="c" style="left:677.00px;top:197px;color:#ffffff">46</span>
<span class="c" style="left:720.12px;top:197px;color:#ffffff">41</span>
<span class="c" style="left:763.25px;top:197px;color:#ffffff">45</span>
<span class="c" style="left:834.80px;top:197px;color:#d5e4f0">·</span>
<span class="c" style="left:849.18px;top:197px;color:#ffffff">-</span>
<span class="c" style="left:863.55px;top:197px;color:#ffffff">-</span>
<span class="c" style="left:877.93px;top:197px;color:#ffffff">q</span>
<span class="c" style="left:892.30px;top:197px;color:#ffffff">B</span>
<span class="c" style="left:906.68px;top:197px;color:#ffffff">4</span>
<span class="c" style="left:921.05px;top:197px;color:#ffffff">6</span>
<span class="c" style="left:935.43px;top:197px;color:#ffffff">4</span>
<span class="c" style="left:964.18px;top:197px;color:#ffffff">0</span>
<span class="c" style="left:978.55px;top:197px;color:#ffffff">-</span>
<span class="c" style="left:992.93px;top:197px;color:#ffffff">L</span>
<span class="c" style="left:1007.30px;top:197px;color:#ffffff">s</span>
<span class="c" style="left:1021.68px;top:197px;color:#ffffff">C</span>
<span class="c" style="left:1036.05px;top:197px;color:#ffffff">F</span>
<span class="c" style="left:1050.43px;top:197px;color:#ffffff">A</span>
<span class="c" style="left:1064.80px;top:197px;color:#ffffff">E</span>
<span class="c" style="left:15.0px;top:225px;color:#2f2f2f">0080</span>
<div style="position:absolute;left:101.0px;top:225px;width:245.875px;height:28px;background:#308cc6"></div>
<div style="position:absolute;left:833.0px;top:225px;width:88.0px;height:28px;background:#308cc6"></div>
<span class="c" style="left:102.00px;top:225px;color:#ffffff">68</span>
<span class="c" style="left:145.12px;top:225px;color:#ffffff">36</span>
<span class="c" style="left:188.25px;top:225px;color:#ffffff">28</span>
<span class="c" style="left:231.38px;top:225px;color:#ffffff">5f</span>
<span class="c" style="left:274.50px;top:225px;color:#ffffff">54</span>
<span class="c" style="left:317.62px;top:225px;color:#ffffff">76</span>
<span class="c" style="left:360.75px;top:225px;color:#000000">00</span>
<span class="c" style="left:403.88px;top:225px;color:#000000">00</span>
<span class="c" style="left:461.38px;top:225px;color:#000000">00</span>
<span class="c" style="left:504.50px;top:225px;color:#000000">c3</span>
<span class="c" style="left:547.62px;top:225px;color:#000000">14</span>
<span class="c" style="left:590.75px;top:225px;color:#000000">00</span>
<span class="c" style="left:633.88px;top:225px;color:#000000">64</span>
<span class="c" style="left:677.00px;top:225px;color:#000000">31</span>
<span class="c" style="left:720.12px;top:225px;color:#000000">32</span>
<span class="c" style="left:763.25px;top:225px;color:#000000">3a</span>
<span class="c" style="left:834.80px;top:225px;color:#ffffff">h</span>
<span class="c" style="left:849.18px;top:225px;color:#ffffff">6</span>
<span class="c" style="left:863.55px;top:225px;color:#ffffff">(</span>
<span class="c" style="left:877.93px;top:225px;color:#ffffff">_</span>
<span class="c" style="left:892.30px;top:225px;color:#ffffff">T</span>
<span class="c" style="left:906.68px;top:225px;color:#ffffff">v</span>
<span class="c" style="left:921.05px;top:225px;color:#a0a0a0">·</span>
<span class="c" style="left:935.43px;top:225px;color:#a0a0a0">·</span>
<span class="c" style="left:964.18px;top:225px;color:#a0a0a0">·</span>
<span class="c" style="left:978.55px;top:225px;color:#a0a0a0">·</span>
<span class="c" style="left:992.93px;top:225px;color:#a0a0a0">·</span>
<span class="c" style="left:1007.30px;top:225px;color:#a0a0a0">·</span>
<span class="c" style="left:1021.68px;top:225px;color:#000000">d</span>
<span class="c" style="left:1036.05px;top:225px;color:#000000">1</span>
<span class="c" style="left:1050.43px;top:225px;color:#000000">2</span>
<span class="c" style="left:1064.80px;top:225px;color:#000000">:</span>
<span class="c" style="left:15.0px;top:253px;color:#9a9a9a">0090</span>
<span class="c" style="left:102.00px;top:253px;color:#000000">63</span>
<span class="c" style="left:145.12px;top:253px;color:#000000">6f</span>
<span class="c" style="left:188.25px;top:253px;color:#000000">6d</span>
<span class="c" style="left:231.38px;top:253px;color:#000000">70</span>
<span class="c" style="left:274.50px;top:253px;color:#000000">6c</span>
<span class="c" style="left:317.62px;top:253px;color:#000000">65</span>
<span class="c" style="left:360.75px;top:253px;color:#000000">74</span>
<span class="c" style="left:403.88px;top:253px;color:#000000">65</span>
<span class="c" style="left:461.38px;top:253px;color:#000000">5f</span>
<span class="c" style="left:504.50px;top:253px;color:#000000">61</span>
<span class="c" style="left:547.62px;top:253px;color:#000000">67</span>
<span class="c" style="left:590.75px;top:253px;color:#000000">6f</span>
<span class="c" style="left:633.88px;top:253px;color:#000000">69</span>
<span class="c" style="left:677.00px;top:253px;color:#000000">2d</span>
<span class="c" style="left:720.12px;top:253px;color:#000000">31</span>
<span class="c" style="left:763.25px;top:253px;color:#000000">65</span>
<span class="c" style="left:834.80px;top:253px;color:#000000">c</span>
<span class="c" style="left:849.18px;top:253px;color:#000000">o</span>
<span class="c" style="left:863.55px;top:253px;color:#000000">m</span>
<span class="c" style="left:877.93px;top:253px;color:#000000">p</span>
<span class="c" style="left:892.30px;top:253px;color:#000000">l</span>
<span class="c" style="left:906.68px;top:253px;color:#000000">e</span>
<span class="c" style="left:921.05px;top:253px;color:#000000">t</span>
<span class="c" style="left:935.43px;top:253px;color:#000000">e</span>
<span class="c" style="left:964.18px;top:253px;color:#000000">_</span>
<span class="c" style="left:978.55px;top:253px;color:#000000">a</span>
<span class="c" style="left:992.93px;top:253px;color:#000000">g</span>
<span class="c" style="left:1007.30px;top:253px;color:#000000">o</span>
<span class="c" style="left:1021.68px;top:253px;color:#000000">i</span>
<span class="c" style="left:1036.05px;top:253px;color:#000000">-</span>
<span class="c" style="left:1050.43px;top:253px;color:#000000">1</span>
<span class="c" style="left:1064.80px;top:253px;color:#000000">e</span>
<span class="c" style="left:15.0px;top:281px;color:#9a9a9a">00a0</span>
<span class="c" style="left:102.00px;top:281px;color:#000000">31</span>
<span class="c" style="left:145.12px;top:281px;color:#000000">3a</span>
<span class="c" style="left:188.25px;top:281px;color:#000000">6d</span>
<span class="c" style="left:231.38px;top:281px;color:#000000">64</span>
<span class="c" style="left:274.50px;top:281px;color:#000000">31</span>
<span class="c" style="left:317.62px;top:281px;color:#000000">31</span>
<span class="c" style="left:360.75px;top:281px;color:#000000">3a</span>
<span class="c" style="left:403.88px;top:281px;color:#000000">6c</span>
<span class="c" style="left:461.38px;top:281px;color:#000000">74</span>
<span class="c" style="left:504.50px;top:281px;color:#000000">5f</span>
<span class="c" style="left:547.62px;top:281px;color:#000000">64</span>
<span class="c" style="left:590.75px;top:281px;color:#000000">6f</span>
<span class="c" style="left:633.88px;top:281px;color:#000000">6e</span>
<span class="c" style="left:677.00px;top:281px;color:#000000">74</span>
<span class="c" style="left:720.12px;top:281px;color:#000000">68</span>
<span class="c" style="left:763.25px;top:281px;color:#000000">61</span>
<span class="c" style="left:834.80px;top:281px;color:#000000">1</span>
<span class="c" style="left:849.18px;top:281px;color:#000000">:</span>
<span class="c" style="left:863.55px;top:281px;color:#000000">m</span>
<span class="c" style="left:877.93px;top:281px;color:#000000">d</span>
<span class="c" style="left:892.30px;top:281px;color:#000000">1</span>
<span class="c" style="left:906.68px;top:281px;color:#000000">1</span>
<span class="c" style="left:921.05px;top:281px;color:#000000">:</span>
<span class="c" style="left:935.43px;top:281px;color:#000000">l</span>
<span class="c" style="left:964.18px;top:281px;color:#000000">t</span>
<span class="c" style="left:978.55px;top:281px;color:#000000">_</span>
<span class="c" style="left:992.93px;top:281px;color:#000000">d</span>
<span class="c" style="left:1007.30px;top:281px;color:#000000">o</span>
<span class="c" style="left:1021.68px;top:281px;color:#000000">n</span>
<span class="c" style="left:1036.05px;top:281px;color:#000000">t</span>
<span class="c" style="left:1050.43px;top:281px;color:#000000">h</span>
<span class="c" style="left:1064.80px;top:281px;color:#000000">a</span>
<span class="c" style="left:15.0px;top:309px;color:#9a9a9a">00b0</span>
<span class="c" style="left:102.00px;top:309px;color:#000000">76</span>
<span class="c" style="left:145.12px;top:309px;color:#000000">65</span>
<span class="c" style="left:188.25px;top:309px;color:#000000">69</span>
<span class="c" style="left:231.38px;top:309px;color:#000000">37</span>
<span class="c" style="left:274.50px;top:309px;color:#000000">65</span>
<span class="c" style="left:317.62px;top:309px;color:#000000">31</span>
<span class="c" style="left:360.75px;top:309px;color:#000000">30</span>
<span class="c" style="left:403.88px;top:309px;color:#000000">3a</span>
<span class="c" style="left:461.38px;top:309px;color:#000000">73</span>
<span class="c" style="left:504.50px;top:309px;color:#000000">68</span>
<span class="c" style="left:547.62px;top:309px;color:#000000">61</span>
<span class="c" style="left:590.75px;top:309px;color:#000000">72</span>
<span class="c" style="left:633.88px;top:309px;color:#000000">65</span>
<span class="c" style="left:677.00px;top:309px;color:#000000">5f</span>
<span class="c" style="left:720.12px;top:309px;color:#000000">6d</span>
<span class="c" style="left:763.25px;top:309px;color:#000000">6f</span>
<span class="c" style="left:834.80px;top:309px;color:#000000">v</span>
<span class="c" style="left:849.18px;top:309px;color:#000000">e</span>
<span class="c" style="left:863.55px;top:309px;color:#000000">i</span>
<span class="c" style="left:877.93px;top:309px;color:#000000">7</span>
<span class="c" style="left:892.30px;top:309px;color:#000000">e</span>
<span class="c" style="left:906.68px;top:309px;color:#000000">1</span>
<span class="c" style="left:921.05px;top:309px;color:#000000">0</span>
<span class="c" style="left:935.43px;top:309px;color:#000000">:</span>
<span class="c" style="left:964.18px;top:309px;color:#000000">s</span>
<span class="c" style="left:978.55px;top:309px;color:#000000">h</span>
<span class="c" style="left:992.93px;top:309px;color:#000000">a</span>
<span class="c" style="left:1007.30px;top:309px;color:#000000">r</span>
<span class="c" style="left:1021.68px;top:309px;color:#000000">e</span>
<span class="c" style="left:1036.05px;top:309px;color:#000000">_</span>
<span class="c" style="left:1050.43px;top:309px;color:#000000">m</span>
<span class="c" style="left:1064.80px;top:309px;color:#000000">o</span>
<span class="c" style="left:15.0px;top:337px;color:#9a9a9a">00c0</span>
<span class="c" style="left:102.00px;top:337px;color:#000000">64</span>
<span class="c" style="left:145.12px;top:337px;color:#000000">65</span>
<span class="c" style="left:188.25px;top:337px;color:#000000">69</span>
<span class="c" style="left:231.38px;top:337px;color:#000000">38</span>
<span class="c" style="left:274.50px;top:337px;color:#000000">65</span>
<span class="c" style="left:317.62px;top:337px;color:#000000">31</span>
<span class="c" style="left:360.75px;top:337px;color:#000000">31</span>
<span class="c" style="left:403.88px;top:337px;color:#000000">3a</span>
<span class="c" style="left:461.38px;top:337px;color:#000000">75</span>
<span class="c" style="left:504.50px;top:337px;color:#000000">70</span>
<span class="c" style="left:547.62px;top:337px;color:#000000">6c</span>
<span class="c" style="left:590.75px;top:337px;color:#000000">6f</span>
<span class="c" style="left:633.88px;top:337px;color:#000000">61</span>
<span class="c" style="left:677.00px;top:337px;color:#000000">64</span>
<span class="c" style="left:720.12px;top:337px;color:#000000">5f</span>
<span class="c" style="left:763.25px;top:337px;color:#000000">6f</span>
<span class="c" style="left:834.80px;top:337px;color:#000000">d</span>
<span class="c" style="left:849.18px;top:337px;color:#000000">e</span>
<span class="c" style="left:863.55px;top:337px;color:#000000">i</span>
<span class="c" style="left:877.93px;top:337px;color:#000000">8</span>
<span class="c" style="left:892.30px;top:337px;color:#000000">e</span>
<span class="c" style="left:906.68px;top:337px;color:#000000">1</span>
<span class="c" style="left:921.05px;top:337px;color:#000000">1</span>
<span class="c" style="left:935.43px;top:337px;color:#000000">:</span>
<span class="c" style="left:964.18px;top:337px;color:#000000">u</span>
<span class="c" style="left:978.55px;top:337px;color:#000000">p</span>
<span class="c" style="left:992.93px;top:337px;color:#000000">l</span>
<span class="c" style="left:1007.30px;top:337px;color:#000000">o</span>
<span class="c" style="left:1021.68px;top:337px;color:#000000">a</span>
<span class="c" style="left:1036.05px;top:337px;color:#000000">d</span>
<span class="c" style="left:1050.43px;top:337px;color:#000000">_</span>
<span class="c" style="left:1064.80px;top:337px;color:#000000">o</span>
<span class="c" style="left:15.0px;top:365px;color:#9a9a9a">00d0</span>
<span class="c" style="left:102.00px;top:365px;color:#000000">6e</span>
<span class="c" style="left:145.12px;top:365px;color:#000000">6c</span>
<span class="c" style="left:188.25px;top:365px;color:#000000">79</span>
<span class="c" style="left:231.38px;top:365px;color:#000000">69</span>
<span class="c" style="left:274.50px;top:365px;color:#000000">33</span>
<span class="c" style="left:317.62px;top:365px;color:#000000">65</span>
<span class="c" style="left:360.75px;top:365px;color:#000000">31</span>
<span class="c" style="left:403.88px;top:365px;color:#000000">32</span>
<span class="c" style="left:461.38px;top:365px;color:#000000">3a</span>
<span class="c" style="left:504.50px;top:365px;color:#000000">75</span>
<span class="c" style="left:547.62px;top:365px;color:#000000">74</span>
<span class="c" style="left:590.75px;top:365px;color:#000000">5f</span>
<span class="c" style="left:633.88px;top:365px;color:#000000">68</span>
<span class="c" style="left:677.00px;top:365px;color:#000000">6f</span>
<span class="c" style="left:720.12px;top:365px;color:#000000">6c</span>
<span class="c" style="left:763.25px;top:365px;color:#000000">65</span>
<span class="c" style="left:834.80px;top:365px;color:#000000">n</span>
<span class="c" style="left:849.18px;top:365px;color:#000000">l</span>
<span class="c" style="left:863.55px;top:365px;color:#000000">y</span>
<span class="c" style="left:877.93px;top:365px;color:#000000">i</span>
<span class="c" style="left:892.30px;top:365px;color:#000000">3</span>
<span class="c" style="left:906.68px;top:365px;color:#000000">e</span>
<span class="c" style="left:921.05px;top:365px;color:#000000">1</span>
<span class="c" style="left:935.43px;top:365px;color:#000000">2</span>
<span class="c" style="left:964.18px;top:365px;color:#000000">:</span>
<span class="c" style="left:978.55px;top:365px;color:#000000">u</span>
<span class="c" style="left:992.93px;top:365px;color:#000000">t</span>
<span class="c" style="left:1007.30px;top:365px;color:#000000">_</span>
<span class="c" style="left:1021.68px;top:365px;color:#000000">h</span>
<span class="c" style="left:1036.05px;top:365px;color:#000000">o</span>
<span class="c" style="left:1050.43px;top:365px;color:#000000">l</span>
<span class="c" style="left:1064.80px;top:365px;color:#000000">e</span>
<span class="c" style="left:15.0px;top:393px;color:#9a9a9a">00e0</span>
<span class="c" style="left:102.00px;top:393px;color:#000000">70</span>
<span class="c" style="left:145.12px;top:393px;color:#000000">75</span>
<span class="c" style="left:188.25px;top:393px;color:#000000">6e</span>
<span class="c" style="left:231.38px;top:393px;color:#000000">63</span>
<span class="c" style="left:274.50px;top:393px;color:#000000">68</span>
<span class="c" style="left:317.62px;top:393px;color:#000000">69</span>
<span class="c" style="left:360.75px;top:393px;color:#000000">34</span>
<span class="c" style="left:403.88px;top:393px;color:#000000">65</span>
<span class="c" style="left:461.38px;top:393px;color:#000000">31</span>
<span class="c" style="left:504.50px;top:393px;color:#000000">31</span>
<span class="c" style="left:547.62px;top:393px;color:#000000">3a</span>
<span class="c" style="left:590.75px;top:393px;color:#000000">75</span>
<span class="c" style="left:633.88px;top:393px;color:#000000">74</span>
<span class="c" style="left:677.00px;top:393px;color:#000000">5f</span>
<span class="c" style="left:720.12px;top:393px;color:#000000">6d</span>
<span class="c" style="left:763.25px;top:393px;color:#000000">65</span>
<span class="c" style="left:834.80px;top:393px;color:#000000">p</span>
<span class="c" style="left:849.18px;top:393px;color:#000000">u</span>
<span class="c" style="left:863.55px;top:393px;color:#000000">n</span>
<span class="c" style="left:877.93px;top:393px;color:#000000">c</span>
<span class="c" style="left:892.30px;top:393px;color:#000000">h</span>
<span class="c" style="left:906.68px;top:393px;color:#000000">i</span>
<span class="c" style="left:921.05px;top:393px;color:#000000">4</span>
<span class="c" style="left:935.43px;top:393px;color:#000000">e</span>
<span class="c" style="left:964.18px;top:393px;color:#000000">1</span>
<span class="c" style="left:978.55px;top:393px;color:#000000">1</span>
<span class="c" style="left:992.93px;top:393px;color:#000000">:</span>
<span class="c" style="left:1007.30px;top:393px;color:#000000">u</span>
<span class="c" style="left:1021.68px;top:393px;color:#000000">t</span>
<span class="c" style="left:1036.05px;top:393px;color:#000000">_</span>
<span class="c" style="left:1050.43px;top:393px;color:#000000">m</span>
<span class="c" style="left:1064.80px;top:393px;color:#000000">e</span>
<span class="c" style="left:15.0px;top:421px;color:#9a9a9a">00f0</span>
<span class="c" style="left:102.00px;top:421px;color:#000000">74</span>
<span class="c" style="left:145.12px;top:421px;color:#000000">61</span>
<span class="c" style="left:188.25px;top:421px;color:#000000">64</span>
<span class="c" style="left:231.38px;top:421px;color:#000000">61</span>
<span class="c" style="left:274.50px;top:421px;color:#000000">74</span>
<span class="c" style="left:317.62px;top:421px;color:#000000">61</span>
<span class="c" style="left:360.75px;top:421px;color:#000000">69</span>
<span class="c" style="left:403.88px;top:421px;color:#000000">32</span>
<span class="c" style="left:461.38px;top:421px;color:#000000">65</span>
<span class="c" style="left:504.50px;top:421px;color:#000000">36</span>
<span class="c" style="left:547.62px;top:421px;color:#000000">3a</span>
<span class="c" style="left:590.75px;top:421px;color:#000000">75</span>
<span class="c" style="left:633.88px;top:421px;color:#000000">74</span>
<span class="c" style="left:677.00px;top:421px;color:#000000">5f</span>
<span class="c" style="left:720.12px;top:421px;color:#000000">70</span>
<span class="c" style="left:763.25px;top:421px;color:#000000">65</span>
<span class="c" style="left:834.80px;top:421px;color:#000000">t</span>
<span class="c" style="left:849.18px;top:421px;color:#000000">a</span>
<span class="c" style="left:863.55px;top:421px;color:#000000">d</span>
<span class="c" style="left:877.93px;top:421px;color:#000000">a</span>
<span class="c" style="left:892.30px;top:421px;color:#000000">t</span>
<span class="c" style="left:906.68px;top:421px;color:#000000">a</span>
<span class="c" style="left:921.05px;top:421px;color:#000000">i</span>
<span class="c" style="left:935.43px;top:421px;color:#000000">2</span>
<span class="c" style="left:964.18px;top:421px;color:#000000">e</span>
<span class="c" style="left:978.55px;top:421px;color:#000000">6</span>
<span class="c" style="left:992.93px;top:421px;color:#000000">:</span>
<span class="c" style="left:1007.30px;top:421px;color:#000000">u</span>
<span class="c" style="left:1021.68px;top:421px;color:#000000">t</span>
<span class="c" style="left:1036.05px;top:421px;color:#000000">_</span>
<span class="c" style="left:1050.43px;top:421px;color:#000000">p</span>
<span class="c" style="left:1064.80px;top:421px;color:#000000">e</span>
<span class="c" style="left:15.0px;top:449px;color:#9a9a9a">0100</span>
<span class="c" style="left:102.00px;top:449px;color:#000000">78</span>
<span class="c" style="left:145.12px;top:449px;color:#000000">69</span>
<span class="c" style="left:188.25px;top:449px;color:#000000">31</span>
<span class="c" style="left:231.38px;top:449px;color:#000000">65</span>
<span class="c" style="left:274.50px;top:449px;color:#000000">65</span>
<span class="c" style="left:317.62px;top:449px;color:#000000">31</span>
<span class="c" style="left:360.75px;top:449px;color:#000000">33</span>
<span class="c" style="left:403.88px;top:449px;color:#000000">3a</span>
<span class="c" style="left:461.38px;top:449px;color:#000000">6d</span>
<span class="c" style="left:504.50px;top:449px;color:#000000">65</span>
<span class="c" style="left:547.62px;top:449px;color:#000000">74</span>
<span class="c" style="left:590.75px;top:449px;color:#000000">61</span>
<span class="c" style="left:633.88px;top:449px;color:#000000">64</span>
<span class="c" style="left:677.00px;top:449px;color:#000000">61</span>
<span class="c" style="left:720.12px;top:449px;color:#000000">74</span>
<span class="c" style="left:763.25px;top:449px;color:#000000">61</span>
<span class="c" style="left:834.80px;top:449px;color:#000000">x</span>
<span class="c" style="left:849.18px;top:449px;color:#000000">i</span>
<span class="c" style="left:863.55px;top:449px;color:#000000">1</span>
<span class="c" style="left:877.93px;top:449px;color:#000000">e</span>
<span class="c" style="left:892.30px;top:449px;color:#000000">e</span>
<span class="c" style="left:906.68px;top:449px;color:#000000">1</span>
<span class="c" style="left:921.05px;top:449px;color:#000000">3</span>
<span class="c" style="left:935.43px;top:449px;color:#000000">:</span>
<span class="c" style="left:964.18px;top:449px;color:#000000">m</span>
<span class="c" style="left:978.55px;top:449px;color:#000000">e</span>
<span class="c" style="left:992.93px;top:449px;color:#000000">t</span>
<span class="c" style="left:1007.30px;top:449px;color:#000000">a</span>
<span class="c" style="left:1021.68px;top:449px;color:#000000">d</span>
<span class="c" style="left:1036.05px;top:449px;color:#000000">a</span>
<span class="c" style="left:1050.43px;top:449px;color:#000000">t</span>
<span class="c" style="left:1064.80px;top:449px;color:#000000">a</span>
<span class="c" style="left:15.0px;top:477px;color:#9a9a9a">0110</span>
<span class="c" style="left:102.00px;top:477px;color:#000000">5f</span>
<span class="c" style="left:145.12px;top:477px;color:#000000">73</span>
<span class="c" style="left:188.25px;top:477px;color:#000000">69</span>
<span class="c" style="left:231.38px;top:477px;color:#000000">7a</span>
<span class="c" style="left:274.50px;top:477px;color:#000000">65</span>
<span class="c" style="left:317.62px;top:477px;color:#000000">69</span>
<span class="c" style="left:360.75px;top:477px;color:#000000">39</span>
<span class="c" style="left:403.88px;top:477px;color:#000000">33</span>
<span class="c" style="left:461.38px;top:477px;color:#000000">30</span>
<span class="c" style="left:504.50px;top:477px;color:#000000">38</span>
<span class="c" style="left:547.62px;top:477px;color:#000000">65</span>
<span class="c" style="left:590.75px;top:477px;color:#000000">34</span>
<span class="c" style="left:633.88px;top:477px;color:#000000">3a</span>
<span class="c" style="left:677.00px;top:477px;color:#000000">72</span>
<span class="c" style="left:720.12px;top:477px;color:#000000">65</span>
<span class="c" style="left:763.25px;top:477px;color:#000000">71</span>
<span class="c" style="left:834.80px;top:477px;color:#000000">_</span>
<span class="c" style="left:849.18px;top:477px;color:#000000">s</span>
<span class="c" style="left:863.55px;top:477px;color:#000000">i</span>
<span class="c" style="left:877.93px;top:477px;color:#000000">z</span>
<span class="c" style="left:892.30px;top:477px;color:#000000">e</span>
<span class="c" style="left:906.68px;top:477px;color:#000000">i</span>
<span class="c" style="left:921.05px;top:477px;color:#000000">9</span>
<span class="c" style="left:935.43px;top:477px;color:#000000">3</span>
<span class="c" style="left:964.18px;top:477px;color:#000000">0</span>
<span class="c" style="left:978.55px;top:477px;color:#000000">8</span>
<span class="c" style="left:992.93px;top:477px;color:#000000">e</span>
<span class="c" style="left:1007.30px;top:477px;color:#000000">4</span>
<span class="c" style="left:1021.68px;top:477px;color:#000000">:</span>
<span class="c" style="left:1036.05px;top:477px;color:#000000">r</span>
<span class="c" style="left:1050.43px;top:477px;color:#000000">e</span>
<span class="c" style="left:1064.80px;top:477px;color:#000000">q</span>
<span class="c" style="left:15.0px;top:505px;color:#9a9a9a">0120</span>
<span class="c" style="left:102.00px;top:505px;color:#000000">71</span>
<span class="c" style="left:145.12px;top:505px;color:#000000">69</span>
<span class="c" style="left:188.25px;top:505px;color:#000000">32</span>
<span class="c" style="left:231.38px;top:505px;color:#000000">30</span>
<span class="c" style="left:274.50px;top:505px;color:#000000">30</span>
<span class="c" style="left:317.62px;top:505px;color:#000000">30</span>
<span class="c" style="left:360.75px;top:505px;color:#000000">65</span>
<span class="c" style="left:403.88px;top:505px;color:#000000">31</span>
<span class="c" style="left:461.38px;top:505px;color:#000000">3a</span>
<span class="c" style="left:504.50px;top:505px;color:#000000">76</span>
<span class="c" style="left:547.62px;top:505px;color:#000000">31</span>
<span class="c" style="left:590.75px;top:505px;color:#000000">37</span>
<span class="c" style="left:633.88px;top:505px;color:#000000">3a</span>
<span class="c" style="left:677.00px;top:505px;color:#000000">71</span>
<span class="c" style="left:720.12px;top:505px;color:#000000">42</span>
<span class="c" style="left:763.25px;top:505px;color:#000000">69</span>
<span class="c" style="left:834.80px;top:505px;color:#000000">q</span>
<span class="c" style="left:849.18px;top:505px;color:#000000">i</span>
<span class="c" style="left:863.55px;top:505px;color:#000000">2</span>
<span class="c" style="left:877.93px;top:505px;color:#000000">0</span>
<span class="c" style="left:892.30px;top:505px;color:#000000">0</span>
<span class="c" style="left:906.68px;top:505px;color:#000000">0</span>
<span class="c" style="left:921.05px;top:505px;color:#000000">e</span>
<span class="c" style="left:935.43px;top:505px;color:#000000">1</span>
<span class="c" style="left:964.18px;top:505px;color:#000000">:</span>
<span class="c" style="left:978.55px;top:505px;color:#000000">v</span>
<span class="c" style="left:992.93px;top:505px;color:#000000">1</span>
<span class="c" style="left:1007.30px;top:505px;color:#000000">7</span>
<span class="c" style="left:1021.68px;top:505px;color:#000000">:</span>
<span class="c" style="left:1036.05px;top:505px;color:#000000">q</span>
<span class="c" style="left:1050.43px;top:505px;color:#000000">B</span>
<span class="c" style="left:1064.80px;top:505px;color:#000000">i</span>
<span class="c" style="left:15.0px;top:533px;color:#9a9a9a">0130</span>
<span class="c" style="left:102.00px;top:533px;color:#000000">74</span>
<span class="c" style="left:145.12px;top:533px;color:#000000">74</span>
<span class="c" style="left:188.25px;top:533px;color:#000000">6f</span>
<span class="c" style="left:231.38px;top:533px;color:#000000">72</span>
<span class="c" style="left:274.50px;top:533px;color:#000000">72</span>
<span class="c" style="left:317.62px;top:533px;color:#000000">65</span>
<span class="c" style="left:360.75px;top:533px;color:#000000">6e</span>
<span class="c" style="left:403.88px;top:533px;color:#000000">74</span>
<span class="c" style="left:461.38px;top:533px;color:#000000">2f</span>
<span class="c" style="left:504.50px;top:533px;color:#000000">34</span>
<span class="c" style="left:547.62px;top:533px;color:#000000">2e</span>
<span class="c" style="left:590.75px;top:533px;color:#000000">36</span>
<span class="c" style="left:633.88px;top:533px;color:#000000">2e</span>
<span class="c" style="left:677.00px;top:533px;color:#000000">34</span>
<span class="c" style="left:720.12px;top:533px;color:#000000">36</span>
<span class="c" style="left:763.25px;top:533px;color:#000000">3a</span>
<span class="c" style="left:834.80px;top:533px;color:#000000">t</span>
<span class="c" style="left:849.18px;top:533px;color:#000000">t</span>
<span class="c" style="left:863.55px;top:533px;color:#000000">o</span>
<span class="c" style="left:877.93px;top:533px;color:#000000">r</span>
<span class="c" style="left:892.30px;top:533px;color:#000000">r</span>
<span class="c" style="left:906.68px;top:533px;color:#000000">e</span>
<span class="c" style="left:921.05px;top:533px;color:#000000">n</span>
<span class="c" style="left:935.43px;top:533px;color:#000000">t</span>
<span class="c" style="left:964.18px;top:533px;color:#000000">/</span>
<span class="c" style="left:978.55px;top:533px;color:#000000">4</span>
<span class="c" style="left:992.93px;top:533px;color:#000000">.</span>
<span class="c" style="left:1007.30px;top:533px;color:#000000">6</span>
<span class="c" style="left:1021.68px;top:533px;color:#000000">.</span>
<span class="c" style="left:1036.05px;top:533px;color:#000000">4</span>
<span class="c" style="left:1050.43px;top:533px;color:#000000">6</span>
<span class="c" style="left:1064.80px;top:533px;color:#000000">:</span>
<span class="c" style="left:15.0px;top:561px;color:#9a9a9a">0140</span>
<span class="c" style="left:102.00px;top:561px;color:#000000">79</span>
<span class="c" style="left:145.12px;top:561px;color:#000000">6f</span>
<span class="c" style="left:188.25px;top:561px;color:#000000">75</span>
<span class="c" style="left:231.38px;top:561px;color:#000000">72</span>
<span class="c" style="left:274.50px;top:561px;color:#000000">69</span>
<span class="c" style="left:317.62px;top:561px;color:#000000">70</span>
<span class="c" style="left:360.75px;top:561px;color:#000000">34</span>
<span class="c" style="left:403.88px;top:561px;color:#000000">3a</span>
<span class="c" style="left:461.38px;top:561px;color:#000000">c0</span>
<span class="c" style="left:504.50px;top:561px;color:#000000">a8</span>
<span class="c" style="left:547.62px;top:561px;color:#000000">1e</span>
<span class="c" style="left:590.75px;top:561px;color:#000000">7d</span>
<span class="c" style="left:633.88px;top:561px;color:#000000">65</span>
<span class="c" style="left:834.80px;top:561px;color:#000000">y</span>
<span class="c" style="left:849.18px;top:561px;color:#000000">o</span>
<span class="c" style="left:863.55px;top:561px;color:#000000">u</span>
<span class="c" style="left:877.93px;top:561px;color:#000000">r</span>
<span class="c" style="left:892.30px;top:561px;color:#000000">i</span>
<span class="c" style="left:906.68px;top:561px;color:#000000">p</span>
<span class="c" style="left:921.05px;top:561px;color:#000000">4</span>
<span class="c" style="left:935.43px;top:561px;color:#000000">:</span>
<span class="c" style="left:964.18px;top:561px;color:#a0a0a0">·</span>
<span class="c" style="left:978.55px;top:561px;color:#a0a0a0">·</span>
<span class="c" style="left:992.93px;top:561px;color:#a0a0a0">·</span>
<span class="c" style="left:1007.30px;top:561px;color:#000000">}</span>
<span class="c" style="left:1021.68px;top:561px;color:#000000">e</span>
</div>
</body></html>
